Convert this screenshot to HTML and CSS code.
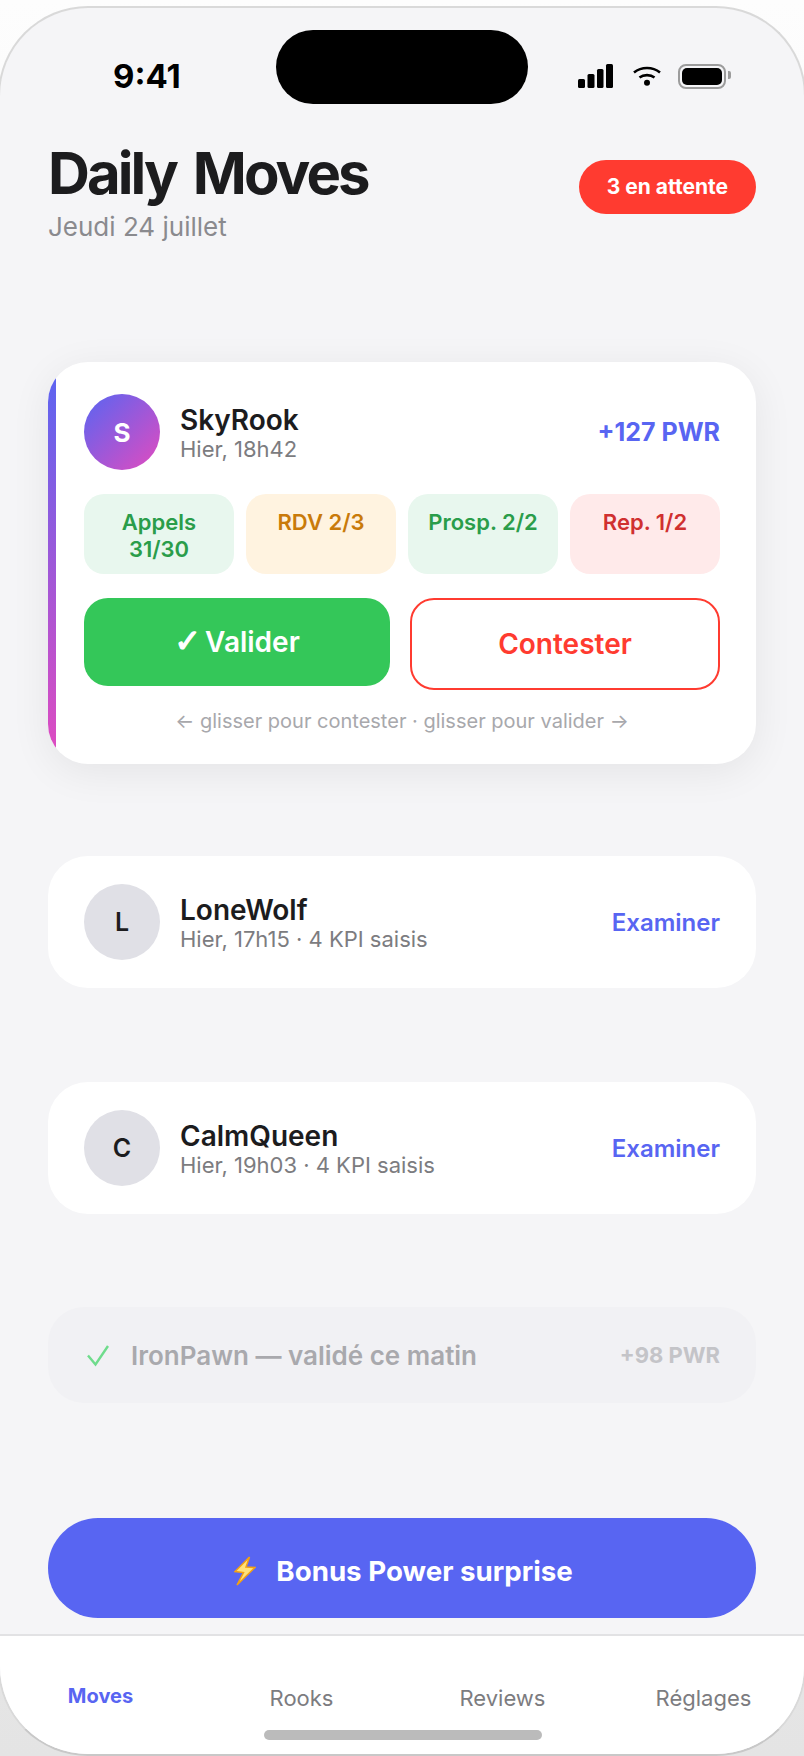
FILE: index.html
```html
<!DOCTYPE html>
<html lang="fr">
<head>
  <meta charset="UTF-8">
  <title>Daily Moves</title>
  <link rel="stylesheet" href="styles.css">
</head>
<body>

  <div class="phone">
    <div class="island"></div>

    <div class="status-bar">
      <span class="time">9:41</span>
      <div class="status-icons">
        <svg class="signal" width="35" height="24" viewBox="0 0 35 24">
          <rect x="0" y="15" width="7" height="9" rx="1.5"/>
          <rect x="9.5" y="10" width="7" height="14" rx="1.5"/>
          <rect x="19" y="5" width="6.5" height="19" rx="1.5"/>
          <rect x="28" y="0" width="7" height="24" rx="1.5"/>
        </svg>
        <svg class="wifi" width="28" height="20" viewBox="0 0 28 20">
          <path d="M1 6.5C8.5 0.5 19.5 0.5 27 6.5" fill="none" stroke="#000" stroke-width="2.6"/>
          <path d="M6.5 11.5C10.5 8.3 17.5 8.3 21.5 11.5" fill="none" stroke="#000" stroke-width="2.6"/>
          <circle cx="14" cy="16.8" r="3"/>
        </svg>
        <div class="battery"><div class="battery-fill"></div></div>
      </div>
    </div>

    <main class="content">
      <header class="page-head">
        <div>
          <h1>Daily Moves</h1>
          <p class="date">Jeudi 24 juillet</p>
        </div>
        <span class="badge">3 en attente</span>
      </header>

      <section class="card-main">
        <div class="card-top">
          <div class="avatar avatar-grad">S</div>
          <div class="who">
            <div class="name">SkyRook</div>
            <div class="meta">Hier, 18h42</div>
          </div>
          <div class="pwr">+127 PWR</div>
        </div>

        <div class="chips">
          <div class="chip chip-green">Appels 31/30</div>
          <div class="chip chip-orange">RDV 2/3</div>
          <div class="chip chip-green">Prosp. 2/2</div>
          <div class="chip chip-red">Rep. 1/2</div>
        </div>

        <div class="actions">
          <button class="btn btn-ok"><span class="tick">✓</span> Valider</button>
          <button class="btn btn-no">Contester</button>
        </div>

        <p class="hint">← glisser pour contester · glisser pour valider →</p>
      </section>

      <section class="row">
        <div class="avatar">L</div>
        <div class="who">
          <div class="name">LoneWolf</div>
          <div class="meta">Hier, 17h15 · 4 KPI saisis</div>
        </div>
        <a class="review">Examiner</a>
      </section>

      <section class="row row-second">
        <div class="avatar">C</div>
        <div class="who">
          <div class="name">CalmQueen</div>
          <div class="meta">Hier, 19h03 · 4 KPI saisis</div>
        </div>
        <a class="review">Examiner</a>
      </section>

      <section class="done">
        <svg class="done-check" width="24" height="24" viewBox="0 0 24 24">
          <path d="M2 12.5L9.5 21.5L22 3" fill="none" stroke="#6fdc8c" stroke-width="2.4"/>
        </svg>
        <span class="done-text">IronPawn — validé ce matin</span>
        <span class="done-pwr">+98 PWR</span>
      </section>

      <button class="bonus">
        <svg class="bolt" width="22" height="30" viewBox="0 0 22 30">
          <path d="M15.5 1L1 15.5L9.5 16.5L3 29L21 11.5L12 11Z" fill="#ffe27a" stroke="#f2a013" stroke-width="1.5"/>
        </svg>
        <span class="bonus-label">Bonus Power surprise</span>
      </button>
    </main>

    <nav class="tabs">
      <a class="tab tab-active">Moves</a>
      <a class="tab">Rooks</a>
      <a class="tab">Reviews</a>
      <a class="tab">Réglages</a>
    </nav>
    <div class="home-bar"></div>
  </div>

</body>
</html>
```

FILE: styles.css
```css
* {
  box-sizing: border-box;
}

html, body {
  margin: 0;
  padding: 0;
}

body {
  width: 804px;
  height: 1756px;
  overflow: hidden;
  padding-top: 6px;
  background: linear-gradient(#fdfdfd, #e4e4e4);
  font-family: Inter, "Liberation Sans", sans-serif;
  color: #1c1c1e;
}

/* side borders sit just outside the window */
.phone {
  position: relative;
  display: flex;
  flex-direction: column;
  width: 808px;
  height: 1750px;
  margin-left: -2px;
  border: 2px solid #d9d9d9;
  border-bottom-color: #c8c8c8;
  border-radius: 90px;
  background: #f5f5f7;
  overflow: hidden;
}

.island {
  position: absolute;
  top: 22px;
  left: 276px;
  width: 252px;
  height: 74px;
  border-radius: 37px;
  background: #000;
}

/* status bar */
.status-bar {
  display: flex;
  justify-content: space-between;
  align-items: center;
  height: 38px;
  margin-top: 49px;
  padding: 0 78px 0 113px;
}

.time {
  font-size: 33px;
  font-weight: 700;
  color: #000;
}

.status-icons {
  display: flex;
  align-items: center;
  gap: 20px;
}

.battery {
  position: relative;
  width: 48px;
  height: 25px;
  margin-left: -3px;
  padding: 2px;
  border: 2px solid #9c9c9c;
  border-radius: 8px;
}

.battery::after {
  content: "";
  position: absolute;
  top: 5px;
  right: -7px;
  width: 3px;
  height: 8px;
  border-radius: 0 2px 2px 0;
  background: #9c9c9c;
}

.battery-fill {
  height: 100%;
  border-radius: 5px;
  background: #000;
}

/* content */
.content {
  flex: 1;
  padding: 0 48px;
}

.page-head {
  display: flex;
  justify-content: space-between;
  margin-top: 46px;
  height: 101px;
}

h1 {
  margin: 0;
  font-size: 58px;
  line-height: 64px;
  font-weight: 700;
  letter-spacing: -2.9px;
  word-spacing: 6px;
}

.date {
  margin: 7px 0 0;
  font-size: 26px;
  line-height: 30px;
  color: #8a8a8e;
}

.badge {
  margin-top: 19px;
  padding: 0 28px;
  height: 54px;
  line-height: 54px;
  border-radius: 27px;
  background: #ff3b30;
  color: #fff;
  font-size: 21px;
  font-weight: 700;
}

.card-main {
  position: relative;
  margin-top: 120px;
  height: 402px;
  padding: 32px 36px;
  border-radius: 40px;
  background: #fff;
  box-shadow: 0 8px 40px rgba(0, 0, 0, 0.07);
  overflow: hidden;
}

.card-main::before {
  content: "";
  position: absolute;
  top: 0;
  bottom: 0;
  left: 0;
  width: 8px;
  background: linear-gradient(#5865f2, #e24bbf);
}

.card-top {
  display: flex;
  align-items: center;
}

.avatar {
  flex: none;
  display: flex;
  align-items: center;
  justify-content: center;
  width: 76px;
  height: 76px;
  margin-right: 20px;
  border-radius: 50%;
  background: #e0e0e6;
  font-size: 25px;
  font-weight: 600;
}

.avatar-grad {
  background: linear-gradient(135deg, #5865f2, #e24bbf);
  color: #fff;
  font-size: 26px;
  font-weight: 700;
}

.who {
  flex: 1;
  padding-top: 2px;
}

.name {
  font-size: 28px;
  line-height: 32px;
  font-weight: 600;
}

.meta {
  font-size: 22px;
  line-height: 26px;
  color: #7c7c80;
}

.pwr {
  font-size: 25px;
  font-weight: 700;
  color: #5865f2;
}

.chips {
  display: grid;
  grid-template-columns: repeat(4, 1fr);
  gap: 12px;
  margin-top: 24px;
}

.chip {
  height: 80px;
  padding: 15px 16px;
  border-radius: 20px;
  text-align: center;
  font-size: 22px;
  line-height: 27px;
  font-weight: 600;
}

.chip-green {
  background: #e8f7ee;
  color: #2a9d4a;
}

.chip-orange {
  background: #fff3e0;
  color: #c97a0a;
}

.chip-red {
  background: #ffeaea;
  color: #d03030;
}

.actions {
  display: flex;
  align-items: flex-start;
  gap: 20px;
  margin-top: 24px;
}

.btn {
  flex: 1;
  border-radius: 24px;
  font-family: inherit;
  font-size: 28px;
  font-weight: 600;
}

.btn-ok {
  height: 88px;
  border: none;
  background: #34c759;
  color: #fff;
}

.tick {
  margin-right: -3px;
  font-family: "DejaVu Sans", sans-serif;
  font-size: 32px;
  line-height: 28px;
  font-weight: 700;
  -webkit-text-stroke: 1.2px #fff;
}

.btn-no {
  height: 92px;
  border: 2px solid #ff3b30;
  background: #fff;
  color: #ff3b30;
}

.hint {
  margin: 16px 0 0;
  text-align: center;
  font-size: 20px;
  line-height: 30px;
  color: #a8a8ac;
}

.row {
  display: flex;
  align-items: center;
  height: 132px;
  margin-top: 92px;
  padding: 0 36px;
  border-radius: 40px;
  background: #fff;
}

.row-second {
  margin-top: 94px;
}

.review {
  font-size: 24px;
  font-weight: 600;
  color: #5865f2;
}

.done {
  display: flex;
  align-items: center;
  height: 96px;
  margin-top: 93px;
  padding: 0 36px 0 38px;
  border-radius: 36px;
  background: #f1f1f4;
}

.done-check {
  margin-right: 21px;
}

.done-text {
  flex: 1;
  font-size: 26px;
  font-weight: 600;
  color: #a9a9ad;
}

.done-pwr {
  font-size: 22px;
  font-weight: 700;
  color: #c4c4c8;
}

.bonus {
  display: flex;
  align-items: center;
  justify-content: center;
  gap: 20px;
  width: 100%;
  height: 100px;
  margin-top: 115px;
  border: none;
  border-radius: 50px;
  background: #5865f2;
  color: #fff;
  font-family: inherit;
  font-size: 27.7px;
  font-weight: 700;
}

.bolt {
  margin: 6px 0 0 3px;
}

.bonus-label {
  padding-top: 6px;
}

.tabs {
  display: grid;
  grid-template-columns: repeat(4, 1fr);
  height: 120px;
  padding-top: 47px;
  border-top: 2px solid #e2e2e4;
  background: #fff;
}

.tab {
  text-align: center;
  font-size: 22px;
  line-height: 30px;
  color: #7c7c80;
}

.tab-active {
  margin-top: -2px;
  font-size: 20px;
  font-weight: 700;
  color: #5865f2;
}

.home-bar {
  position: absolute;
  bottom: 14px;
  left: 264px;
  width: 278px;
  height: 10px;
  border-radius: 5px;
  background: #bbb;
}
```
